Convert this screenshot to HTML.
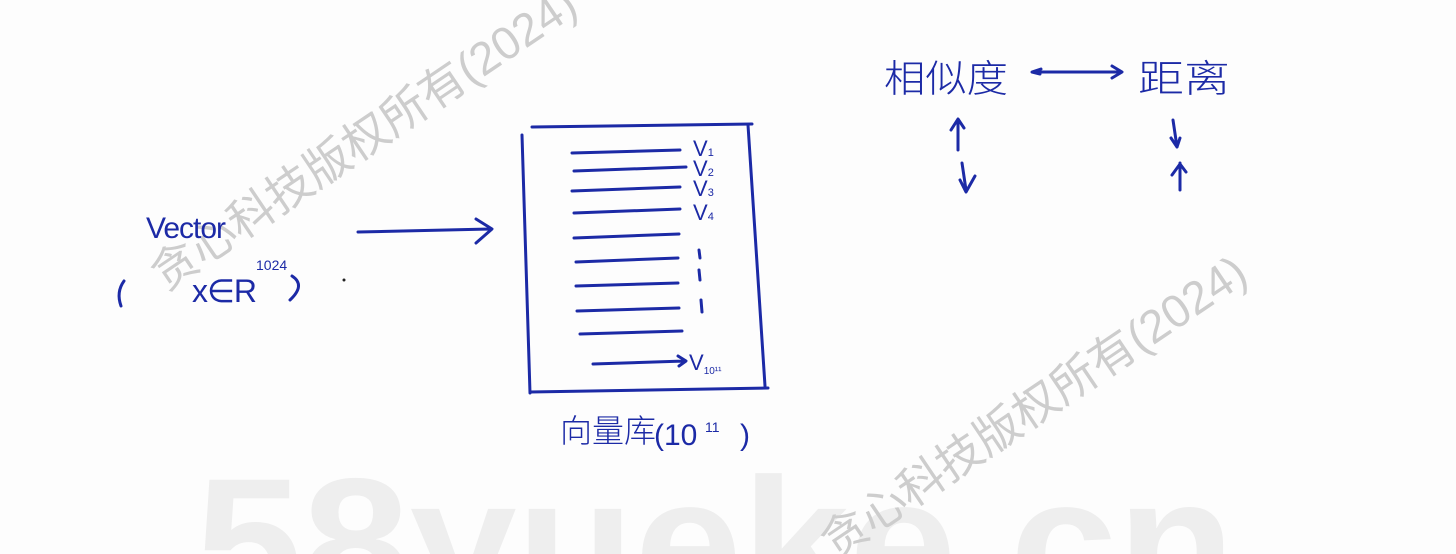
<!DOCTYPE html>
<html><head><meta charset="utf-8"><style>
html,body{margin:0;padding:0;background:#fdfdfd;width:1456px;height:554px;overflow:hidden}
svg{display:block}
</style></head><body>
<svg width="1456" height="554" viewBox="0 0 1456 554" xmlns="http://www.w3.org/2000/svg" style="overflow:hidden">
<rect width="1456" height="554" fill="#fdfdfd"/>
<text x="195" y="605" font-family="Liberation Sans, sans-serif" font-weight="bold" font-size="182" fill="#eeeeee" textLength="1040" lengthAdjust="spacingAndGlyphs">58yueke.cn</text>
<g font-family="Liberation Sans, 'Noto Sans CJK SC', sans-serif" font-size="46" fill="#cdcdcd">
<text transform="translate(165,292) rotate(-34)">贪心科技版权所有(2024)</text>
<text transform="translate(835,560) rotate(-34)">贪心科技版权所有(2024)</text>
</g>
<g fill="none" stroke="#1c2aa6" stroke-width="3" stroke-linecap="round" stroke-linejoin="round">
<path d="M532 127 L752 124"/>
<path d="M522 135 L530 393"/>
<path d="M530 392 L768 388"/>
<path d="M748 125 L765 386"/>
<path d="M572 153 L680 150"/>
<path d="M574 171 L686 167"/>
<path d="M572 191 L680 187"/>
<path d="M574 213 L680 209"/>
<path d="M574 238 L679 234"/>
<path d="M576 262 L678 258"/>
<path d="M576 286 L678 283"/>
<path d="M577 311 L679 308"/>
<path d="M580 334 L682 331"/>
<path d="M593 364 L685 361 M678 356 L686 361 L679 366"/>
<path d="M358 232 L490 229 M476 219 L492 229 L476 243"/>
<path d="M958 150 L958 120 M951 130 L958 119 L964 128 M962 163 L966 190 M960 180 L966 192 L975 176"/>
<path d="M1173 120 L1177 147 M1171 138 L1177 147 M1180 138 L1177 147 M1180 163 L1180 190 M1172 175 L1180 164 L1186 172"/>
<path d="M1040 74 L1032 72 L1041 69 M1033 72 L1120 72 M1112 66 L1122 72 L1112 78"/>
<path d="M124 281 Q116 292 121 306"/>
<path d="M292 276 Q306 285 290 300"/>
<path d="M699 250 L700 258 M699 270 L700 280 M701 300 L702 312"/>
</g>
<g font-family="'Noto Sans CJK SC', sans-serif" fill="#1c2aa6" font-weight="300">
<text x="884" y="92" font-size="38" textLength="124" lengthAdjust="spacingAndGlyphs">相似度</text>
<text x="1138" y="92" font-size="38" textLength="92" lengthAdjust="spacingAndGlyphs">距离</text>
<text x="560" y="442" font-size="32">向量库</text>
</g>
<g font-family="'Liberation Sans', sans-serif" fill="#1c2aa6">
<text x="146" y="238" font-size="30" letter-spacing="-1">Vector</text>
<text x="192" y="302" font-size="32" letter-spacing="-1">x∈R</text>
<text x="256" y="270" font-size="14">1024</text>
<text x="654" y="445" font-size="30">(10</text>
<text x="705" y="432" font-size="14">11</text>
<text x="740" y="445" font-size="30">)</text>
<text x="693" y="156" font-size="22">V<tspan font-size="11">1</tspan></text>
<text x="693" y="176" font-size="22">V<tspan font-size="11">2</tspan></text>
<text x="693" y="196" font-size="22">V<tspan font-size="11">3</tspan></text>
<text x="693" y="220" font-size="22">V<tspan font-size="11">4</tspan></text>
<text x="689" y="370" font-size="22">V<tspan font-size="10" dy="4">10¹¹</tspan></text>
</g>
<circle cx="344" cy="280" r="1.5" fill="#222"/>
</svg>
</body></html>
